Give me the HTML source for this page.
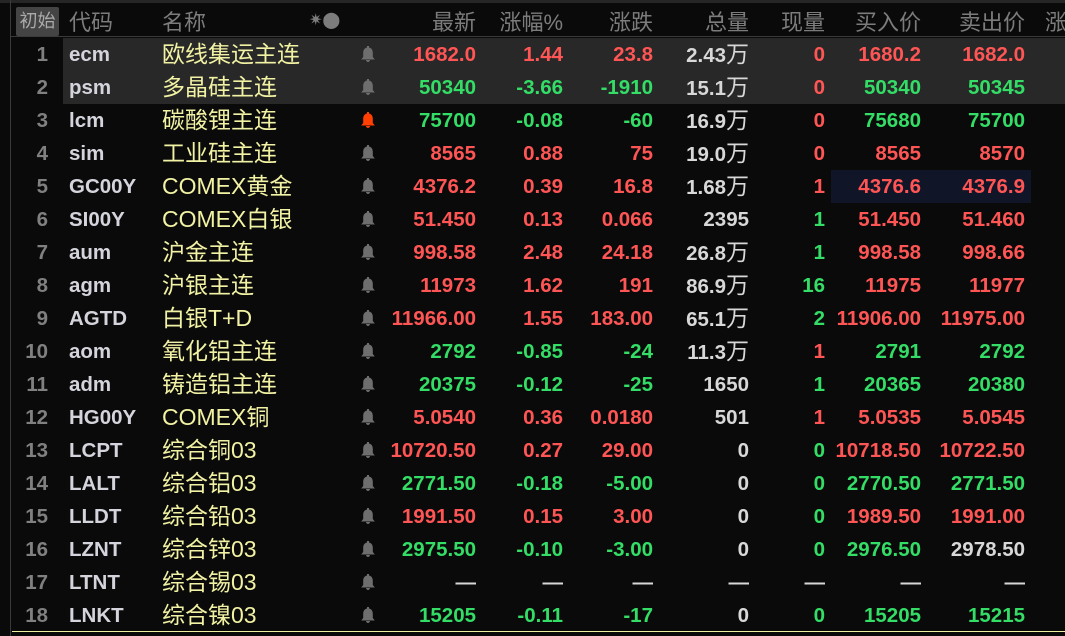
<!DOCTYPE html>
<html><head><meta charset="utf-8"><style>
body{margin:0;width:1065px;height:636px;background:#0a0a0a;overflow:hidden;position:relative;font-family:"Liberation Sans","Noto Sans CJK SC",sans-serif}
.top{position:absolute;left:0;top:0;width:1065px;height:3px;background:#262626}
.vl{position:absolute;left:10px;top:0;width:1px;height:636px;background:#3a3a3a}
.hd{position:absolute;left:11px;top:3px;right:0;height:33px;border-bottom:1px solid #3a3a3a;color:#7c7c7c;font-size:22px}
.hd span,.r span{position:absolute;white-space:nowrap}
.hd span{top:2px}
.init{left:5px;top:4px!important;width:43px;height:29px;background:#444;color:#aaa;font-size:18px;line-height:29px;text-align:center;border-radius:2px}
.r{position:absolute;left:11px;right:0;height:33px;font-size:20.5px;font-weight:bold;line-height:33px}
.r.hl{background:#282828;left:63px}
.r.hl .n{left:-52px}
.r.hl .c{left:6px}.r.hl .nm{left:99px}.r.hl .b{left:298px}
.n{left:0;width:37px;text-align:right;color:#808080}
.c{left:58px;color:#d4d4dc}
.nm{left:151px;color:#f2f2a4;font-weight:normal;font-size:23px}
.b{position:absolute;left:350px;top:8px}
.R{color:#ff5555}.G{color:#33dd66}.W{color:#d8d8d8}
.wan{font-weight:normal;font-size:23px}
.sel{position:absolute;left:831px;top:170px;width:200px;height:33px;background:#111528}
.yl{position:absolute;left:12px;top:631px;right:0;height:1px;background:#f0f0a0}
</style></head><body>
<div class="top"></div><div class="vl"></div>
<div class="hd">
<span class="init">初始</span><span style="left:58px">代码</span><span style="left:151px">名称</span>
<span style="left:298px;font-size:16px;top:7px">✷⬤</span>
<span style="right:589px">最新</span><span style="right:502px">涨幅%</span><span style="right:412px">涨跌</span><span style="right:316px">总量</span><span style="right:240px">现量</span><span style="right:144px">买入价</span><span style="right:40px">卖出价</span><span style="left:1034px">涨</span>
</div>
<div class="sel"></div>
<svg width="0" height="0" style="position:absolute"><defs><symbol id="bell" viewBox="0 0 14 16"><path d="M6 0h2v1.5c2.7.6 3.8 2.7 3.8 5.5V11l2 2.5H.2l2-2.5V7c0-2.8 1.1-4.9 3.8-5.5z M5 14h4c0 1-1 2-2 2s-2-1-2-2z"/></symbol></defs></svg>

<div class="r hl" style="top:38px"><span class="n">1</span><span class="c">ecm</span><span class="nm">欧线集运主连</span><svg class="b" width="14" height="16" fill="#6e6e6e"><use href="#bell"/></svg><span class="R" style="right:589px">1682.0</span><span class="R" style="right:502px">1.44</span><span class="R" style="right:412px">23.8</span><span class="W" style="right:316px">2.43<span class="wan" style="position:static">万</span></span><span class="R" style="right:240px">0</span><span class="R" style="right:144px">1680.2</span><span class="R" style="right:40px">1682.0</span></div>
<div class="r hl" style="top:71px"><span class="n">2</span><span class="c">psm</span><span class="nm">多晶硅主连</span><svg class="b" width="14" height="16" fill="#6e6e6e"><use href="#bell"/></svg><span class="G" style="right:589px">50340</span><span class="G" style="right:502px">-3.66</span><span class="G" style="right:412px">-1910</span><span class="W" style="right:316px">15.1<span class="wan" style="position:static">万</span></span><span class="R" style="right:240px">0</span><span class="G" style="right:144px">50340</span><span class="G" style="right:40px">50345</span></div>
<div class="r" style="top:104px"><span class="n">3</span><span class="c">lcm</span><span class="nm">碳酸锂主连</span><svg class="b" width="14" height="16" fill="#ff4000"><use href="#bell"/></svg><span class="G" style="right:589px">75700</span><span class="G" style="right:502px">-0.08</span><span class="G" style="right:412px">-60</span><span class="W" style="right:316px">16.9<span class="wan" style="position:static">万</span></span><span class="R" style="right:240px">0</span><span class="G" style="right:144px">75680</span><span class="G" style="right:40px">75700</span></div>
<div class="r" style="top:137px"><span class="n">4</span><span class="c">sim</span><span class="nm">工业硅主连</span><svg class="b" width="14" height="16" fill="#6e6e6e"><use href="#bell"/></svg><span class="R" style="right:589px">8565</span><span class="R" style="right:502px">0.88</span><span class="R" style="right:412px">75</span><span class="W" style="right:316px">19.0<span class="wan" style="position:static">万</span></span><span class="R" style="right:240px">0</span><span class="R" style="right:144px">8565</span><span class="R" style="right:40px">8570</span></div>
<div class="r" style="top:170px"><span class="n">5</span><span class="c">GC00Y</span><span class="nm">COMEX黄金</span><svg class="b" width="14" height="16" fill="#6e6e6e"><use href="#bell"/></svg><span class="R" style="right:589px">4376.2</span><span class="R" style="right:502px">0.39</span><span class="R" style="right:412px">16.8</span><span class="W" style="right:316px">1.68<span class="wan" style="position:static">万</span></span><span class="R" style="right:240px">1</span><span class="R" style="right:144px">4376.6</span><span class="R" style="right:40px">4376.9</span></div>
<div class="r" style="top:203px"><span class="n">6</span><span class="c">SI00Y</span><span class="nm">COMEX白银</span><svg class="b" width="14" height="16" fill="#6e6e6e"><use href="#bell"/></svg><span class="R" style="right:589px">51.450</span><span class="R" style="right:502px">0.13</span><span class="R" style="right:412px">0.066</span><span class="W" style="right:316px">2395</span><span class="G" style="right:240px">1</span><span class="R" style="right:144px">51.450</span><span class="R" style="right:40px">51.460</span></div>
<div class="r" style="top:236px"><span class="n">7</span><span class="c">aum</span><span class="nm">沪金主连</span><svg class="b" width="14" height="16" fill="#6e6e6e"><use href="#bell"/></svg><span class="R" style="right:589px">998.58</span><span class="R" style="right:502px">2.48</span><span class="R" style="right:412px">24.18</span><span class="W" style="right:316px">26.8<span class="wan" style="position:static">万</span></span><span class="G" style="right:240px">1</span><span class="R" style="right:144px">998.58</span><span class="R" style="right:40px">998.66</span></div>
<div class="r" style="top:269px"><span class="n">8</span><span class="c">agm</span><span class="nm">沪银主连</span><svg class="b" width="14" height="16" fill="#6e6e6e"><use href="#bell"/></svg><span class="R" style="right:589px">11973</span><span class="R" style="right:502px">1.62</span><span class="R" style="right:412px">191</span><span class="W" style="right:316px">86.9<span class="wan" style="position:static">万</span></span><span class="G" style="right:240px">16</span><span class="R" style="right:144px">11975</span><span class="R" style="right:40px">11977</span></div>
<div class="r" style="top:302px"><span class="n">9</span><span class="c">AGTD</span><span class="nm">白银T+D</span><svg class="b" width="14" height="16" fill="#6e6e6e"><use href="#bell"/></svg><span class="R" style="right:589px">11966.00</span><span class="R" style="right:502px">1.55</span><span class="R" style="right:412px">183.00</span><span class="W" style="right:316px">65.1<span class="wan" style="position:static">万</span></span><span class="G" style="right:240px">2</span><span class="R" style="right:144px">11906.00</span><span class="R" style="right:40px">11975.00</span></div>
<div class="r" style="top:335px"><span class="n">10</span><span class="c">aom</span><span class="nm">氧化铝主连</span><svg class="b" width="14" height="16" fill="#6e6e6e"><use href="#bell"/></svg><span class="G" style="right:589px">2792</span><span class="G" style="right:502px">-0.85</span><span class="G" style="right:412px">-24</span><span class="W" style="right:316px">11.3<span class="wan" style="position:static">万</span></span><span class="R" style="right:240px">1</span><span class="G" style="right:144px">2791</span><span class="G" style="right:40px">2792</span></div>
<div class="r" style="top:368px"><span class="n">11</span><span class="c">adm</span><span class="nm">铸造铝主连</span><svg class="b" width="14" height="16" fill="#6e6e6e"><use href="#bell"/></svg><span class="G" style="right:589px">20375</span><span class="G" style="right:502px">-0.12</span><span class="G" style="right:412px">-25</span><span class="W" style="right:316px">1650</span><span class="G" style="right:240px">1</span><span class="G" style="right:144px">20365</span><span class="G" style="right:40px">20380</span></div>
<div class="r" style="top:401px"><span class="n">12</span><span class="c">HG00Y</span><span class="nm">COMEX铜</span><svg class="b" width="14" height="16" fill="#6e6e6e"><use href="#bell"/></svg><span class="R" style="right:589px">5.0540</span><span class="R" style="right:502px">0.36</span><span class="R" style="right:412px">0.0180</span><span class="W" style="right:316px">501</span><span class="R" style="right:240px">1</span><span class="R" style="right:144px">5.0535</span><span class="R" style="right:40px">5.0545</span></div>
<div class="r" style="top:434px"><span class="n">13</span><span class="c">LCPT</span><span class="nm">综合铜03</span><svg class="b" width="14" height="16" fill="#6e6e6e"><use href="#bell"/></svg><span class="R" style="right:589px">10720.50</span><span class="R" style="right:502px">0.27</span><span class="R" style="right:412px">29.00</span><span class="W" style="right:316px">0</span><span class="G" style="right:240px">0</span><span class="R" style="right:144px">10718.50</span><span class="R" style="right:40px">10722.50</span></div>
<div class="r" style="top:467px"><span class="n">14</span><span class="c">LALT</span><span class="nm">综合铝03</span><svg class="b" width="14" height="16" fill="#6e6e6e"><use href="#bell"/></svg><span class="G" style="right:589px">2771.50</span><span class="G" style="right:502px">-0.18</span><span class="G" style="right:412px">-5.00</span><span class="W" style="right:316px">0</span><span class="G" style="right:240px">0</span><span class="G" style="right:144px">2770.50</span><span class="G" style="right:40px">2771.50</span></div>
<div class="r" style="top:500px"><span class="n">15</span><span class="c">LLDT</span><span class="nm">综合铅03</span><svg class="b" width="14" height="16" fill="#6e6e6e"><use href="#bell"/></svg><span class="R" style="right:589px">1991.50</span><span class="R" style="right:502px">0.15</span><span class="R" style="right:412px">3.00</span><span class="W" style="right:316px">0</span><span class="G" style="right:240px">0</span><span class="R" style="right:144px">1989.50</span><span class="R" style="right:40px">1991.00</span></div>
<div class="r" style="top:533px"><span class="n">16</span><span class="c">LZNT</span><span class="nm">综合锌03</span><svg class="b" width="14" height="16" fill="#6e6e6e"><use href="#bell"/></svg><span class="G" style="right:589px">2975.50</span><span class="G" style="right:502px">-0.10</span><span class="G" style="right:412px">-3.00</span><span class="W" style="right:316px">0</span><span class="G" style="right:240px">0</span><span class="G" style="right:144px">2976.50</span><span class="W" style="right:40px">2978.50</span></div>
<div class="r" style="top:566px"><span class="n">17</span><span class="c">LTNT</span><span class="nm">综合锡03</span><svg class="b" width="14" height="16" fill="#6e6e6e"><use href="#bell"/></svg><span class="W" style="right:589px">—</span><span class="W" style="right:502px">—</span><span class="W" style="right:412px">—</span><span class="W" style="right:316px">—</span><span class="W" style="right:240px">—</span><span class="W" style="right:144px">—</span><span class="W" style="right:40px">—</span></div>
<div class="r" style="top:599px"><span class="n">18</span><span class="c">LNKT</span><span class="nm">综合镍03</span><svg class="b" width="14" height="16" fill="#6e6e6e"><use href="#bell"/></svg><span class="G" style="right:589px">15205</span><span class="G" style="right:502px">-0.11</span><span class="G" style="right:412px">-17</span><span class="W" style="right:316px">0</span><span class="G" style="right:240px">0</span><span class="G" style="right:144px">15205</span><span class="G" style="right:40px">15215</span></div>
<div class="yl"></div>
</body></html>
